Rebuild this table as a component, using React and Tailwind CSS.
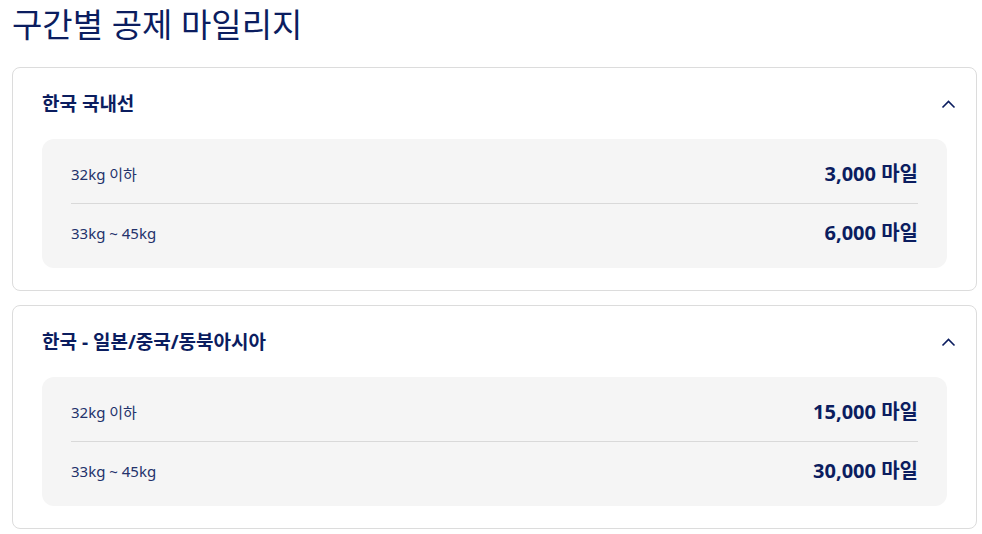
const sections = [
  {
    title: "한국 국내선",
    rows: [
      { weight: "32kg 이하", miles: "3,000 마일" },
      { weight: "33kg ~ 45kg", miles: "6,000 마일" },
    ],
  },
  {
    title: "한국 - 일본/중국/동북아시아",
    rows: [
      { weight: "32kg 이하", miles: "15,000 마일" },
      { weight: "33kg ~ 45kg", miles: "30,000 마일" },
    ],
  },
];

function ChevronUp() {
  return (
    <svg width="15" height="9" viewBox="0 0 15 9" fill="none">
      <path d="M1.5 7.5 L7.5 1.5 L13.5 7.5" stroke="#0b1d5f" strokeWidth="1.6" />
    </svg>
  );
}

function Section({ section }) {
  return (
    <div className="border border-[#dcdcdc] rounded-lg bg-white px-[29px] pt-6 pb-[22px]">
      <div className="flex items-center justify-between h-6 mb-[23px] -mr-[9px]">
        <h2 className="text-[19px] font-bold text-[#0b1d5f] leading-6">{section.title}</h2>
        <ChevronUp />
      </div>
      <div className="bg-[#f5f5f5] rounded-xl px-[29px] py-[6px]">
        {section.rows.map((row, i) => (
          <div
            key={row.weight}
            className={`flex items-center justify-between py-[18px] ${i > 0 ? "border-t border-[#d9d9d9]" : ""}`}
          >
            <span className="text-[15px] text-[#23326b] leading-[22px]">{row.weight}</span>
            <span className="text-[20px] font-bold text-[#0b1d5f] leading-[22px]">{row.miles}</span>
          </div>
        ))}
      </div>
    </div>
  );
}

export default function App() {
  return (
    <div
      className="bg-white pl-3 pr-[5px] min-h-screen"
      style={{ fontFamily: '"Noto Sans", "Noto Sans CJK KR", sans-serif' }}
    >
      <h1 className="text-[33px] leading-[40px] pt-[5px] mb-[22px] text-[#0b1d5f] font-normal">
        구간별 공제 마일리지
      </h1>
      <div className="flex flex-col gap-[14px]">
        {sections.map((s) => (
          <Section key={s.title} section={s} />
        ))}
      </div>
    </div>
  );
}
